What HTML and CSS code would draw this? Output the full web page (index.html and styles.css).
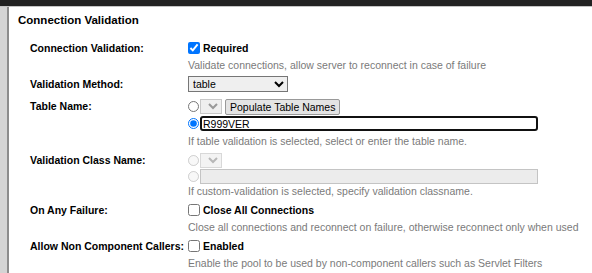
FILE: index.html
```html
<!DOCTYPE html>
<html lang="en">
<head>
    <meta charset="UTF-8">
    <title>Connection Validation</title>
    <link rel="stylesheet" href="styles.css">
</head>
<body>
    <div class="topbar"></div>
    <div class="frame">
        <div class="sidebar"></div>
        <div class="panel">
            <h2 class="section-title">Connection Validation</h2>
            <div class="form-grid">
                <div class="label">Connection Validation:</div>
                <div class="value">
                    <label class="check"><input type="checkbox" checked> Required</label>
                    <div class="help">Validate connections, allow server to reconnect in case of failure</div>
                </div>

                <div class="label">Validation Method:</div>
                <div class="value">
                    <select class="method">
                        <option>table</option>
                    </select>
                </div>

                <div class="label">Table Name:</div>
                <div class="value">
                    <div class="line">
                        <input type="radio" name="tbl">
                        <select class="mini"></select>
                        <button class="btn">Populate Table Names</button>
                    </div>
                    <div class="line">
                        <input type="radio" name="tbl" checked>
                        <input type="text" class="text focused" value="R999VER">
                    </div>
                    <div class="help">If table validation is selected, select or enter the table name.</div>
                </div>

                <div class="label">Validation Class Name:</div>
                <div class="value">
                    <div class="line compact">
                        <input type="radio" name="cls" disabled>
                        <select class="mini" disabled></select>
                    </div>
                    <div class="line compact">
                        <input type="radio" name="cls" disabled>
                        <input type="text" class="text" disabled>
                    </div>
                    <div class="help tight">If custom-validation is selected, specify validation classname.</div>
                </div>

                <div class="label">On Any Failure:</div>
                <div class="value">
                    <label class="check"><input type="checkbox"> Close All Connections</label>
                    <div class="help">Close all connections and reconnect on failure, otherwise reconnect only when used</div>
                </div>

                <div class="label">Allow Non Component Callers:</div>
                <div class="value">
                    <label class="check"><input type="checkbox"> Enabled</label>
                    <div class="help">Enable the pool to be used by non-component callers such as Servlet Filters</div>
                </div>
            </div>
        </div>
    </div>
</body>
</html>
```

FILE: styles.css
```css
* {
    box-sizing: border-box;
}

body {
    margin: 0;
    font-family: 'Liberation Sans', Arial, sans-serif;
    font-size: 10.5px;
    color: #000;
    background: #fff;
    height: 273px;
    overflow: hidden;
}

.topbar {
    height: 7px;
    background: #222;
    border-bottom: 1px solid #c4c4c4;
}

.frame {
    display: flex;
    height: 266px;
}

.sidebar {
    width: 9px;
    background: #d4d4d4;
    border-right: 2px solid #8c8c8c;
}

.panel {
    flex: 1;
    padding: 6px 0 0 9px;
}

.section-title {
    margin: 0 0 13px;
    font-size: 11.5px;
    line-height: 14px;
    font-weight: bold;
}

.form-grid {
    display: grid;
    grid-template-columns: 158px 1fr;
    row-gap: 4px;
    padding-left: 12px;
}

.label {
    font-weight: bold;
    line-height: 16px;
}

.value {
    line-height: 14px;
}

.check {
    display: flex;
    align-items: center;
    gap: 3px;
    font-weight: bold;
    height: 16px;
}

.check input {
    margin: 0;
    width: 12px;
    height: 12px;
}

.help {
    color: #7a7a7a;
    margin-top: 2px;
}

.help.tight {
    margin-top: 0;
}

.line {
    display: flex;
    align-items: center;
    height: 17px;
}

.line.compact {
    height: 16px;
}

.line input[type="radio"] {
    margin: 0 1px 0 0;
    width: 11px;
    height: 11px;
}

select {
    font-family: inherit;
    font-size: 10.5px;
}

.method {
    width: 100px;
    height: 16px;
    padding: 0;
    margin-bottom: 2px;
    border: 1px solid #767676;
    border-radius: 0;
}

.mini {
    width: 22px;
    height: 15px;
    color: #999;
    border: 1px solid #c8c8c8;
    margin-right: 3px;
}

.btn {
    font-family: inherit;
    font-size: 10.5px;
    height: 16px;
    padding: 0 4px;
    background: #e4e4e4;
    border: 1px solid #999;
    border-radius: 2px;
}

.text {
    width: 338px;
    height: 15px;
    padding: 0 1px;
    font-family: inherit;
    font-size: 10.5px;
    border: 1px solid #999;
}

.text.focused {
    border: 2px solid #111;
    border-radius: 3px;
}

.text:disabled {
    background: #ececec;
    border-color: #c4c4c4;
}
```
